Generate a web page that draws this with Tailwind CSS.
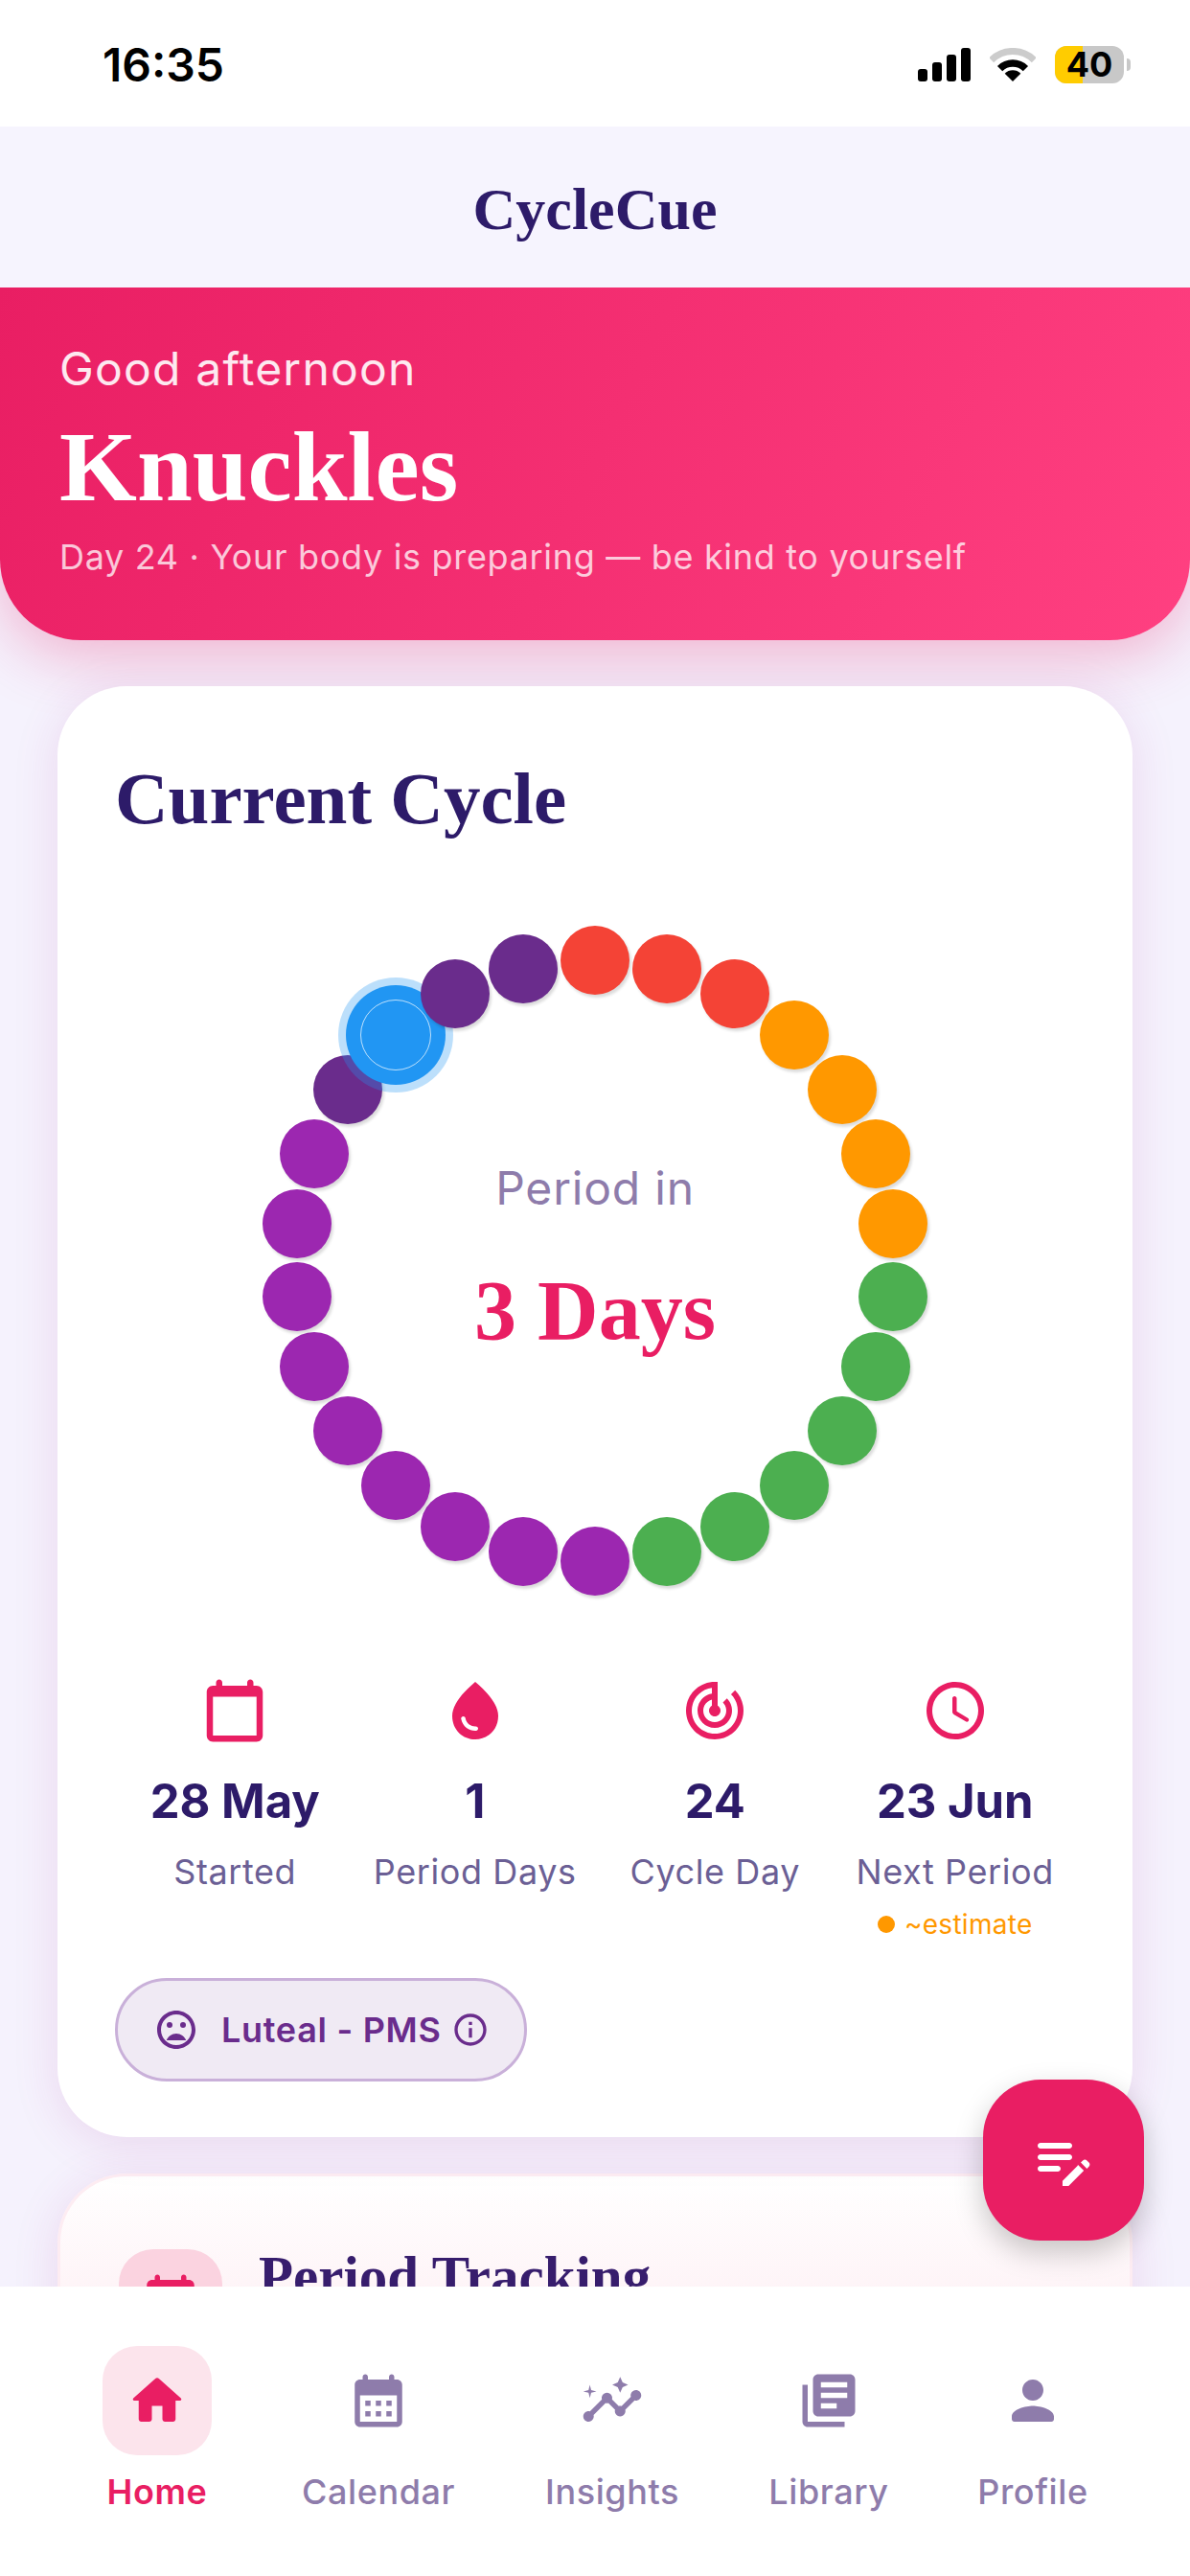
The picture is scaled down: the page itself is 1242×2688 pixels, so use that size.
<!DOCTYPE html>
<html lang="en">
<head>
  <meta charset="UTF-8">
  <title>CycleCue</title>
  <script src="https://cdn.jsdelivr.net/npm/@tailwindcss/browser@4"></script>
</head>
<body class="bg-white">
<div class="relative w-[1242px] h-[2688px] overflow-hidden bg-[#f5f2fd] font-['Inter',sans-serif]">

  <!-- Status bar -->
  <div class="h-[132px] bg-white flex items-start justify-between pl-[107px] pr-[62px] pt-[40px]">
    <span class="text-[48px] leading-[56px] font-semibold text-black">16:35</span>
    <div class="flex items-center gap-[20px] h-[39px] mt-[8px]">
      <div class="flex items-end gap-[5px] h-[35px]">
        <div class="w-[10px] h-[13px] rounded-[3px] bg-black"></div>
        <div class="w-[10px] h-[20px] rounded-[3px] bg-black"></div>
        <div class="w-[10px] h-[28px] rounded-[3px] bg-black"></div>
        <div class="w-[10px] h-[35px] rounded-[3px] bg-black"></div>
      </div>
      <svg width="48" height="36" viewBox="-24 -35 48 36" fill="none">
        <path d="M-22.3 -22.3A31.5 31.5 0 0 1 22.3 -22.3" stroke="#cccccc" stroke-width="7"/>
        <path d="M-13.4 -13.4A19 19 0 0 1 13.4 -13.4" stroke="#000" stroke-width="7.5"/>
        <path d="M0 0L-8.3 -8.3A11.7 11.7 0 0 1 8.3 -8.3Z" fill="#000"/>
      </svg>
      <div class="flex items-center gap-[3px]">
        <div class="relative w-[72px] h-[39px] rounded-[12px] bg-[#c8c8c8] flex items-center justify-center">
          <div class="absolute left-0 top-0 bottom-0 w-[29px] rounded-l-[12px] bg-[#ffcc00]"></div>
          <span class="relative text-[36px] leading-[39px] font-bold text-black">40</span>
        </div>
        <div class="w-[4px] h-[13px] rounded-r-[4px] bg-[#c8c8c8]"></div>
      </div>
    </div>
  </div>

  <!-- App bar -->
  <div class="relative z-10 h-[168px] bg-[#f6f4fe] flex items-center justify-center pt-[4px]">
    <h1 class="font-['Liberation_Serif',serif] font-bold text-[62px] leading-none text-[#2d1b69]">CycleCue</h1>
  </div>

  <!-- Hero -->
  <div class="h-[368px] rounded-b-[84px] bg-linear-[115deg] from-[#e91e63] to-[#ff4081] pl-[62px] pt-[57px] shadow-[0_16px_64px_rgba(233,30,99,0.3)] text-white relative">
    <p class="text-[48px] leading-[56px] tracking-[1.2px] text-white/90">Good afternoon</p>
    <p class="font-['Liberation_Serif',serif] font-bold text-[104px] leading-[112px] mt-[18px]">Knuckles</p>
    <p class="text-[36px] leading-[44px] tracking-[0.68px] text-white/75 mt-[16px]">Day 24 · Your body is preparing — be kind to yourself</p>
  </div>

  <!-- Current cycle card -->
  <div class="mx-[60px] mt-[48px] h-[1514px] rounded-[72px] bg-white px-[60px] pt-[75px] shadow-[0_8px_48px_rgba(170,40,140,0.13)] relative">
    <h2 class="font-['Liberation_Serif',serif] font-bold text-[77px] leading-[84px] text-[#2d1b69]">Current Cycle</h2>

    <div id="ring" class="relative w-[720px] h-[720px] mx-auto mt-[80px]">
      <div class="absolute inset-0 flex flex-col items-center justify-center">
        <p class="text-[48px] leading-[56px] tracking-[0.8px] text-[#8e7cab] mb-[50px]">Period in</p>
        <p class="font-['Liberation_Serif',serif] font-bold text-[88px] leading-[100px] text-[#e91e63]">3 Days</p>
      </div>
    </div>

    <!-- Stats -->
    <div class="grid grid-cols-4 mt-[71px] text-center">
      <div class="flex flex-col items-center">
        <svg class="w-[78px] h-[78px]" viewBox="0 0 24 24" fill="#e91e63"><path d="M19 4h-1V3c0-.55-.45-1-1-1s-1 .45-1 1v1H8V3c0-.55-.45-1-1-1s-1 .45-1 1v1H5c-1.1 0-2 .9-2 2v14c0 1.1.9 2 2 2h14c1.1 0 2-.9 2-2V6c0-1.1-.9-2-2-2zm0 16H5V7.5h14V20z"/></svg>
        <p class="text-[49px] leading-[60px] font-bold text-[#2d1b69] mt-[26px]">28 May</p>
        <p class="text-[36px] leading-[44px] tracking-[0.6px] text-[#6b5f95] mt-[21px]">Started</p>
      </div>
      <div class="flex flex-col items-center">
        <svg class="w-[72px] h-[72px] my-[3px]" viewBox="0 0 24 24" fill="#e91e63"><path d="M12 2c-5.33 4.55-8 8.48-8 11.8 0 4.98 3.8 8.2 8 8.2s8-3.22 8-8.2c0-3.32-2.67-7.25-8-11.8zM7.83 14c.37 0 .67.26.74.62.41 2.22 2.28 2.98 3.64 2.87.43-.02.79.32.79.75 0 .4-.32.73-.72.75-2.13.13-4.62-1.09-5.19-4.12-.08-.45.28-.87.74-.87z"/></svg>
        <p class="text-[49px] leading-[60px] font-bold text-[#2d1b69] mt-[26px]">1</p>
        <p class="text-[36px] leading-[44px] tracking-[0.6px] text-[#6b5f95] mt-[21px]">Period Days</p>
      </div>
      <div class="flex flex-col items-center">
        <svg class="w-[72px] h-[72px] my-[3px]" viewBox="0 0 24 24" fill="#e91e63"><path d="M19.07 4.93l-1.41 1.41C19.1 7.79 20 9.79 20 12c0 4.42-3.58 8-8 8s-8-3.58-8-8c0-4.08 3.05-7.44 7-7.93v2.02C8.16 6.57 6 9.03 6 12c0 3.31 2.69 6 6 6s6-2.69 6-6c0-1.66-.67-3.16-1.76-4.24l-1.41 1.41C15.55 9.9 16 10.9 16 12c0 2.21-1.79 4-4 4s-4-1.79-4-4c0-1.86 1.28-3.41 3-3.86v2.14c-.6.35-1 .98-1 1.72 0 1.1.9 2 2 2s2-.9 2-2c0-.74-.4-1.38-1-1.72V2h-1C6.48 2 2 6.48 2 12s4.48 10 10 10 10-4.48 10-10c0-2.76-1.12-5.26-2.93-7.07z"/></svg>
        <p class="text-[49px] leading-[60px] font-bold text-[#2d1b69] mt-[26px]">24</p>
        <p class="text-[36px] leading-[44px] tracking-[0.6px] text-[#6b5f95] mt-[21px]">Cycle Day</p>
      </div>
      <div class="flex flex-col items-center">
        <svg class="w-[72px] h-[72px] my-[3px]" viewBox="0 0 24 24" fill="#e91e63"><path d="M11.99 2C6.47 2 2 6.48 2 12s4.47 10 9.99 10C17.52 22 22 17.52 22 12S17.52 2 11.99 2zM12 20c-4.42 0-8-3.58-8-8s3.58-8 8-8 8 3.58 8 8-3.58 8-8 8zm-.22-13h-.06c-.4 0-.72.32-.72.72v4.72c0 .35.18.68.49.86l4.15 2.49c.34.2.78.1.98-.24.21-.34.1-.79-.25-.99l-3.87-2.3V7.72c0-.4-.32-.72-.72-.72z"/></svg>
        <p class="text-[49px] leading-[60px] font-bold text-[#2d1b69] mt-[26px]">23 Jun</p>
        <p class="text-[36px] leading-[44px] tracking-[0.6px] text-[#6b5f95] mt-[21px]">Next Period</p>
        <div class="flex items-center gap-[10px] mt-[15px] h-[36px]">
          <div class="w-[18px] h-[18px] rounded-full bg-[#ff9800]"></div>
          <span class="text-[28px] leading-[36px] tracking-[0.3px] text-[#ff9800]">~estimate</span>
        </div>
      </div>
    </div>

    <!-- Phase chip -->
    <div class="flex items-center h-[108px] w-[430px] mt-[38px] rounded-full border-[3px] border-[#c9b0d9] bg-[#f0eaf4] pl-[37px] text-[#6a2c8c]">
      <svg class="w-[48px] h-[48px]" viewBox="0 0 24 24" fill="#6a2c8c"><circle cx="15.5" cy="9.5" r="1.5"/><circle cx="8.5" cy="9.5" r="1.5"/><path d="M12 14c-2.33 0-4.31 1.46-5.11 3.5h10.22c-.8-2.04-2.78-3.5-5.11-3.5zM11.99 2C6.47 2 2 6.48 2 12s4.47 10 9.99 10C17.52 22 22 17.52 22 12S17.52 2 11.99 2zM12 20c-4.42 0-8-3.58-8-8s3.58-8 8-8 8 3.58 8 8-3.58 8-8 8z"/></svg>
      <span class="text-[36px] leading-none tracking-[0.7px] font-semibold ml-[23px]">Luteal - PMS</span>
      <svg class="w-[40px] h-[40px] ml-[10px]" viewBox="0 0 24 24" fill="#6a2c8c"><path d="M11 7h2v2h-2zm0 4h2v6h-2zm1-9C6.48 2 2 6.48 2 12s4.48 10 10 10 10-4.48 10-10S17.52 2 12 2zm0 18c-4.41 0-8-3.59-8-8s3.59-8 8-8 8 3.59 8 8-3.59 8-8 8z"/></svg>
    </div>
  </div>

  <!-- Period tracking card, cut off by the nav -->
  <div class="mx-[60px] mt-[38px] h-[300px] rounded-t-[72px] border-t-[3px] border-x-[3px] border-[#fdecf2] bg-linear-to-b from-white to-[#fce4ec] pl-[61px] pt-[76px] flex items-start gap-[38px] shadow-[0_8px_48px_rgba(170,40,140,0.13)]">
    <div class="w-[108px] h-[108px] rounded-[36px] bg-[#fbd3e0] flex items-center justify-center shrink-0">
      <svg class="w-[66px] h-[66px]" viewBox="0 0 24 24" fill="#e91e63"><path d="M19 4h-1V3c0-.55-.45-1-1-1s-1 .45-1 1v1H8V3c0-.55-.45-1-1-1s-1 .45-1 1v1H5c-1.11 0-2 .9-2 2v14c0 1.1.89 2 2 2h14c1.1 0 2-.9 2-2V6c0-1.1-.9-2-2-2z"/></svg>
    </div>
    <h2 class="font-['Liberation_Serif',serif] font-bold text-[59px] leading-[72px] text-[#371d6d] mt-[-8px]">Period Tracking</h2>
  </div>

  <!-- Floating button -->
  <div class="absolute left-[1026px] top-[2170px] z-20 w-[168px] h-[168px] rounded-[60px] bg-[#e91e63] flex items-center justify-center shadow-[0_12px_30px_rgba(0,0,0,0.22)]">
    <svg class="w-[72px] h-[72px]" viewBox="0 0 24 24" fill="#fff"><path d="M4 10h10c.55 0 1 .45 1 1s-.45 1-1 1H4c-.55 0-1-.45-1-1s.45-1 1-1zm0-4h10c.55 0 1 .45 1 1s-.45 1-1 1H4c-.55 0-1-.45-1-1s.45-1 1-1zm0 10h6c.55 0 1-.45 1-1s-.45-1-1-1H4c-.55 0-1 .45-1 1s.45 1 1 1zm14.01-3.13l.71-.71c.39-.39 1.02-.39 1.41 0l.71.71c.39.39.39 1.02 0 1.41l-.71.71-2.12-2.12zm-1.06 1.06l-5.3 5.3V21h2.12l5.3-5.3-2.12-2.12z"/></svg>
  </div>

  <!-- Bottom nav -->
  <nav class="absolute left-0 right-0 bottom-0 z-10 h-[302px] bg-white flex items-start justify-between px-[107px] pt-[62px] text-[36px] leading-[44px] tracking-[0.6px] font-medium text-[#8e7cab]">
    <div class="flex flex-col items-center w-[114px]">
      <div class="w-[114px] h-[114px] rounded-[36px] bg-[#fce4ec] flex items-center justify-center">
        <svg class="w-[66px] h-[66px]" viewBox="0 0 24 24" fill="#e91e63"><path d="M10 19v-5h4v5c0 .55.45 1 1 1h3c.55 0 1-.45 1-1v-7h1.7c.46 0 .68-.57.33-.87L12.67 3.6c-.38-.34-.96-.34-1.34 0l-8.36 7.53c-.34.3-.13.87.33.87H5v7c0 .55.45 1 1 1h3c.55 0 1-.45 1-1z"/></svg>
      </div>
      <span class="mt-[16px] text-[#e91e63] font-semibold">Home</span>
    </div>
    <div class="flex flex-col items-center w-[160px]">
      <div class="h-[114px] flex items-center justify-center">
        <svg class="w-[66px] h-[66px]" viewBox="0 0 24 24" fill="#8e7cab"><path d="M19 4h-1V3c0-.55-.45-1-1-1s-1 .45-1 1v1H8V3c0-.55-.45-1-1-1s-1 .45-1 1v1H5c-1.11 0-2 .9-2 2v14c0 1.1.89 2 2 2h14c1.1 0 2-.9 2-2V6c0-1.1-.9-2-2-2zm0 16H5V10h14v10zM9 14H7v-2h2v2zm4 0h-2v-2h2v2zm4 0h-2v-2h2v2zm-8 4H7v-2h2v2zm4 0h-2v-2h2v2zm4 0h-2v-2h2v2z"/></svg>
      </div>
      <span class="mt-[16px]">Calendar</span>
    </div>
    <div class="flex flex-col items-center w-[140px]">
      <div class="h-[114px] flex items-center justify-center">
        <svg class="w-[66px] h-[66px]" viewBox="0 0 24 24" fill="#8e7cab"><path d="M21 8c-1.45 0-2.26 1.44-1.93 2.51l-3.55 3.56c-.3-.09-.74-.09-1.04 0l-2.55-2.55C12.27 10.45 11.46 9 10 9c-1.45 0-2.27 1.44-1.93 2.52l-4.56 4.55C2.44 15.74 1 16.55 1 18c0 1.1.9 2 2 2 1.45 0 2.26-1.44 1.93-2.51l4.55-4.56c.3.09.74.09 1.04 0l2.55 2.55C12.73 16.55 13.54 18 15 18c1.45 0 2.27-1.44 1.93-2.52l3.56-3.55c1.07.33 2.51-.48 2.51-1.93 0-1.1-.9-2-2-2z"/><path d="M15 9l.94-2.07L18 6l-2.06-.93L15 3l-.92 2.07L12 6l2.08.93zM3.5 11L4 9l2-.5L4 8l-.5-2L3 8l-2 .5L3 9z"/></svg>
      </div>
      <span class="mt-[16px]">Insights</span>
    </div>
    <div class="flex flex-col items-center w-[124px]">
      <div class="h-[114px] flex items-center justify-center">
        <svg class="w-[66px] h-[66px]" viewBox="0 0 24 24" fill="#8e7cab"><path d="M4 6H2v14c0 1.1.9 2 2 2h14v-2H4V6zm16-4H8c-1.1 0-2 .9-2 2v12c0 1.1.9 2 2 2h12c1.1 0 2-.9 2-2V4c0-1.1-.9-2-2-2zm-1 9H9V9h10v2zm-4 4H9v-2h6v2zm4-8H9V5h10v2z"/></svg>
      </div>
      <span class="mt-[16px]">Library</span>
    </div>
    <div class="flex flex-col items-center w-[114px]">
      <div class="h-[114px] flex items-center justify-center">
        <svg class="w-[66px] h-[66px]" viewBox="0 0 24 24" fill="#8e7cab"><path d="M12 12c2.21 0 4-1.79 4-4s-1.79-4-4-4-4 1.79-4 4 1.79 4 4 4zm0 2c-2.67 0-8 1.34-8 4v1c0 .55.45 1 1 1h14c.55 0 1-.45 1-1v-1c0-2.66-5.33-4-8-4z"/></svg>
      </div>
      <span class="mt-[16px]">Profile</span>
    </div>
  </nav>
</div>

<script>
  // one dot per cycle day, day 1 at the top, going clockwise
  const dias = [
    "bg-[#f44336]", "bg-[#f44336]", "bg-[#f44336]",
    "bg-[#ff9800]", "bg-[#ff9800]", "bg-[#ff9800]", "bg-[#ff9800]",
    "bg-[#4caf50]", "bg-[#4caf50]", "bg-[#4caf50]", "bg-[#4caf50]", "bg-[#4caf50]", "bg-[#4caf50]",
    "bg-[#9c27b0]", "bg-[#9c27b0]", "bg-[#9c27b0]", "bg-[#9c27b0]", "bg-[#9c27b0]", "bg-[#9c27b0]", "bg-[#9c27b0]", "bg-[#9c27b0]", "bg-[#9c27b0]",
    "bg-[#6a2c8c]", "hoje", "bg-[#6a2c8c]", "bg-[#6a2c8c]"
  ];
  const ring = document.getElementById("ring");
  dias.forEach((cor, i) => {
    const ang = i / dias.length * Math.PI * 2;
    const x = 360 + 313.5 * Math.sin(ang);
    const y = 360 - 313.5 * Math.cos(ang);
    const dot = document.createElement("div");
    if (cor === "hoje") {
      dot.className = "absolute w-[104px] h-[104px] -translate-x-1/2 -translate-y-1/2 rounded-full bg-[#2196f3] shadow-[0_0_0_8px_rgba(33,150,243,0.3)] flex items-center justify-center";
      dot.innerHTML = '<div class="w-[74px] h-[74px] rounded-full border-[1.5px] border-white/70"></div>';
    } else {
      dot.className = "absolute w-[72px] h-[72px] -translate-x-1/2 -translate-y-1/2 rounded-full shadow-[2px_3px_3px_rgba(0,0,0,0.14)] " + cor;
    }
    dot.style.left = x + "px";
    dot.style.top = y + "px";
    ring.appendChild(dot);
  });
</script>
</body>
</html>
